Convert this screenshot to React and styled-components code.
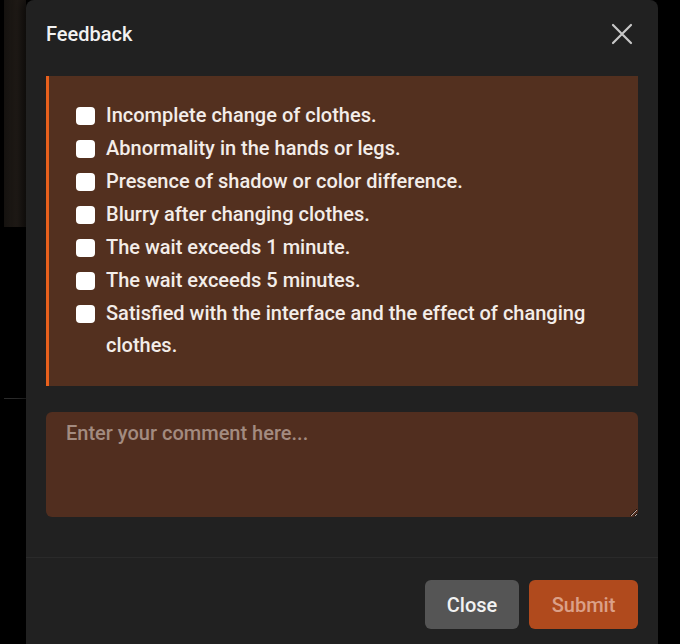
import React from "react";
import styled, { createGlobalStyle } from "styled-components";

const Global = createGlobalStyle`
  html, body { margin: 0; padding: 0; background: #000; }
  body { font-family: Roboto, "Liberation Sans", sans-serif; overflow: hidden; }
  * { box-sizing: border-box; }
`;

const Page = styled.div`
  display: flex;
  width: 680px;
  height: 644px;
  overflow: hidden;
  background: #000;
`;

const Backdrop = styled.div`
  width: 26px;
  flex: none;
  display: flex;
  flex-direction: column;
`;

const BgImage = styled.div`
  height: 227px;
  margin-left: 4px;
  background: linear-gradient(90deg, #15120f 0%, #1f1a16 60%, #1a1613 100%);
`;

const BgLine = styled.div`
  height: 1px;
  margin: 171px 0 0 4px;
  background: #2b2b2b;
`;

const Modal = styled.div`
  width: 632px;
  flex: none;
  height: 660px;
  background: #212121;
  border-radius: 8px 8px 0 0;
  display: flex;
  flex-direction: column;
  box-shadow: -4px 0 10px rgba(0, 0, 0, 0.5);
`;

const Header = styled.div`
  height: 76px;
  display: flex;
  align-items: center;
  justify-content: space-between;
  padding: 0 24px 8px 20px;
`;

const Title = styled.h2`
  margin: 0;
  font-size: 20px;
  font-weight: 500;
  color: #f2f2f2;
`;

const CloseIcon = styled.button`
  background: none;
  border: none;
  padding: 0;
  width: 24px;
  height: 24px;
  display: flex;
  align-items: center;
  justify-content: center;
  cursor: pointer;
`;

const Body = styled.div`
  padding: 0 20px;
  display: flex;
  flex-direction: column;
  gap: 26px;
`;

const OptionsPanel = styled.div`
  background: #53301f;
  border-left: 3px solid #e8601c;
  padding: 23px 20px 25px 27px;
  display: flex;
  flex-direction: column;
`;

const Option = styled.label`
  display: flex;
  align-items: flex-start;
  gap: 11px;
  font-size: 20px;
  font-weight: 500;
  color: #f3ede9;
  cursor: pointer;
`;

const Box = styled.span`
  flex: none;
  width: 19px;
  height: 18px;
  margin-top: 8px;
  background: #fff;
  border-radius: 4px;
`;

const OptionText = styled.span`
  flex: 1;
  line-height: ${(p) => (p.$wrap ? "32px" : "33px")};
`;

const Comment = styled.textarea`
  display: block;
  width: 100%;
  height: 105px;
  background: #512e1f;
  border: none;
  border-radius: 6px;
  padding: 10px 20px;
  font-family: Roboto, "Liberation Sans", sans-serif;
  font-size: 20px;
  font-weight: 500;
  line-height: 22px;
  color: #f0e6e0;
  outline: none;
  resize: vertical;
  &::placeholder { color: #a38b80; }
`;

const Divider = styled.div`
  height: 1px;
  background: #2a2a2a;
  margin-top: 40px;
`;

const Footer = styled.div`
  display: flex;
  justify-content: flex-end;
  gap: 10px;
  padding: 22px 20px 0;
`;

const Button = styled.button`
  height: 49px;
  padding: 0 20px;
  min-width: ${(p) => (p.$primary ? "109px" : "94px")};
  border: none;
  border-radius: 6px;
  font-family: Roboto, "Liberation Sans", sans-serif;
  font-size: 20px;
  font-weight: 500;
  background: ${(p) => (p.$primary ? "#b04a1d" : "#555555")};
  color: ${(p) => (p.$primary ? "#dba088" : "#f2f2f2")};
  cursor: pointer;
`;

const options = [
  "Incomplete change of clothes.",
  "Abnormality in the hands or legs.",
  "Presence of shadow or color difference.",
  "Blurry after changing clothes.",
  "The wait exceeds 1 minute.",
  "The wait exceeds 5 minutes.",
  "Satisfied with the interface and the effect of changing clothes.",
];

export default function App() {
  return (
    <>
      <Global />
      <Page>
        <Backdrop>
          <BgImage />
          <BgLine />
        </Backdrop>
        <Modal>
          <Header>
            <Title>Feedback</Title>
            <CloseIcon aria-label="Close">
              <svg width="22" height="22" viewBox="0 0 22 22" fill="none">
                <path d="M2 2 L20 20 M20 2 L2 20" stroke="#c8c8c8" strokeWidth="2.2" strokeLinecap="round" />
              </svg>
            </CloseIcon>
          </Header>
          <Body>
            <OptionsPanel>
              {options.map((o, i) => (
                <Option key={o}>
                  <Box />
                  <OptionText $wrap={i === options.length - 1}>{o}</OptionText>
                </Option>
              ))}
            </OptionsPanel>
            <Comment placeholder="Enter your comment here..." />
          </Body>
          <Divider />
          <Footer>
            <Button>Close</Button>
            <Button $primary>Submit</Button>
          </Footer>
        </Modal>
      </Page>
    </>
  );
}
